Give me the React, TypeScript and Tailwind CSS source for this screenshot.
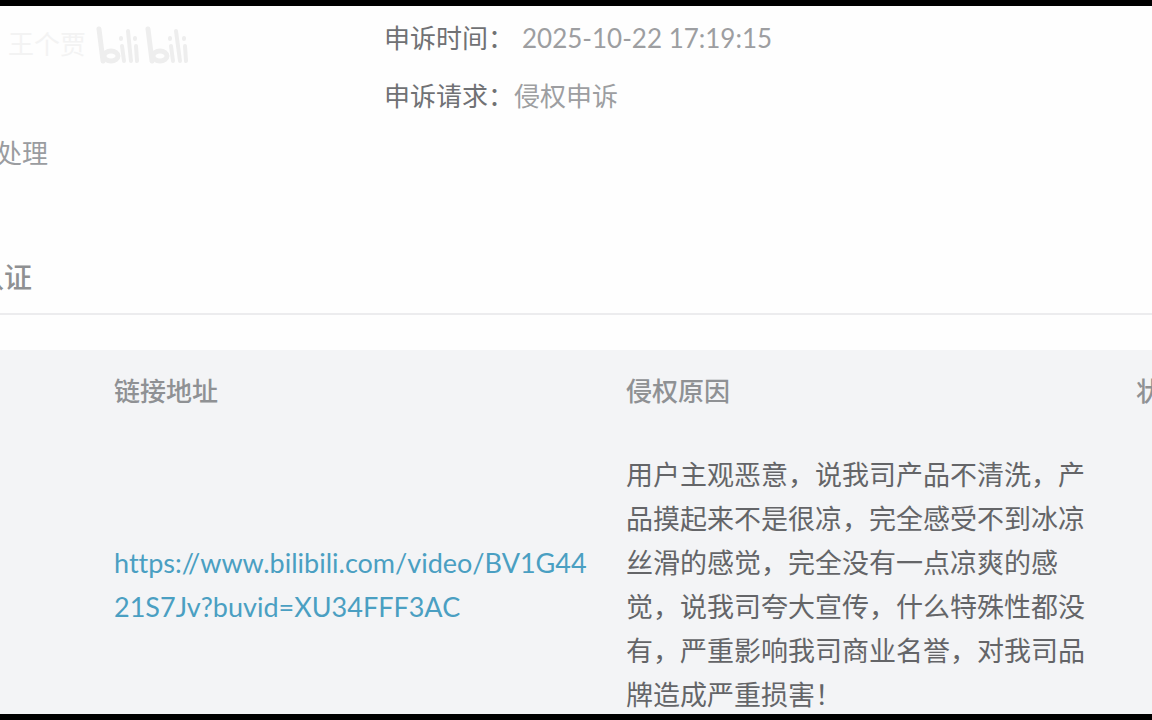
const appeal = [
  { label: '申诉时间：', value: '2025-10-22 17:19:15', valueClass: 'pl-2' },
  { label: '申诉请求：', value: '侵权申诉', valueClass: '' },
]

const rows = [
  {
    url: 'https://www.bilibili.com/video/BV1G4421S7Jv?buvid=XU34FFF3AC',
    reason:
      '用户主观恶意，说我司产品不清洗，产品摸起来不是很凉，完全感受不到冰凉丝滑的感觉，完全没有一点凉爽的感觉，说我司夸大宣传，什么特殊性都没有，严重影响我司商业名誉，对我司品牌造成严重损害！',
  },
]

function BilibiliLogo() {
  return (
    <svg
      role="img"
      aria-label="bilibili"
      width="98"
      height="44"
      viewBox="0 0 98 44"
      fill="none"
      stroke="#eeeeee"
      strokeWidth="5"
      strokeLinecap="round"
    >
      <path d="M5 7 L9 39" />
      <ellipse cx="17" cy="34" rx="7" ry="5" />
      <path d="M28 24 L30 39 M27 16 V17 M34 9 L37 39 M42 24 L43 39 M41 16 V17" strokeWidth="4" />
      <path d="M54 7 L58 39" />
      <ellipse cx="66" cy="34" rx="7" ry="5" />
      <path d="M77 24 L79 39 M76 16 V17 M82 9 L86 39 M91 24 L92 39 M90 16 V17" strokeWidth="4" />
    </svg>
  )
}

function Watermark() {
  return (
    <div className="absolute top-4 left-2 flex items-center gap-2">
      <span className="text-[26px] text-[#f3f3f3]">王个贾</span>
      <BilibiliLogo />
    </div>
  )
}

function Summary() {
  return (
    <section className="relative flex pt-[10px] text-[26px]">
      <Watermark />
      <div className="w-1/3 shrink-0 pt-[115px]">
        <p className="-ml-1 text-[#9a9ca0]">处理</p>
      </div>
      <dl className="space-y-[14px]">
        {appeal.map((item) => (
          <div key={item.label} className="flex">
            <dt className="text-[#707174]">{item.label}</dt>
            <dd className={`text-[#9d9ea1] ${item.valueClass}`}>{item.value}</dd>
          </div>
        ))}
      </dl>
    </section>
  )
}

function LinkTable() {
  return (
    <table className="w-full table-fixed bg-[#f3f4f6] text-left">
      <colgroup>
        <col className="w-[98px]" />
        <col className="w-[512px]" />
        <col />
        <col className="w-8" />
      </colgroup>
      <thead>
        <tr className="text-[26px] text-[#8f9194]">
          <th />
          <th className="px-4 py-[19px] font-medium">链接地址</th>
          <th className="px-4 py-[19px] font-medium">侵权原因</th>
          <th className="py-[19px] pl-4 font-medium whitespace-nowrap">状</th>
        </tr>
      </thead>
      <tbody>
        {rows.map((row) => (
          <tr key={row.url}>
            <td />
            <td className="px-4 pt-[21px] align-middle">
              <a href={row.url} className="break-all text-[#4a9fc2] [font-variant-ligatures:none]">
                {row.url}
              </a>
            </td>
            <td className="px-4 pt-[21px] text-[#646568]">{row.reason}</td>
            <td />
          </tr>
        ))}
      </tbody>
    </table>
  )
}

export default function App() {
  return (
    <div className="flex h-screen flex-col border-y-[6px] border-black bg-[#fefefe] font-[Lato,'Noto_Sans_CJK_SC',sans-serif] text-[27px] leading-[44px]">
      <main className="min-h-0 flex-1 overflow-hidden">
        <Summary />
        <h2 className="-ml-6 mt-20 border-b-2 border-[#ececee] pb-[14px] text-[28px] font-medium text-[#8f9092]">
          认证
        </h2>
        <div className="pt-[35px]">
          <LinkTable />
        </div>
      </main>
    </div>
  )
}
